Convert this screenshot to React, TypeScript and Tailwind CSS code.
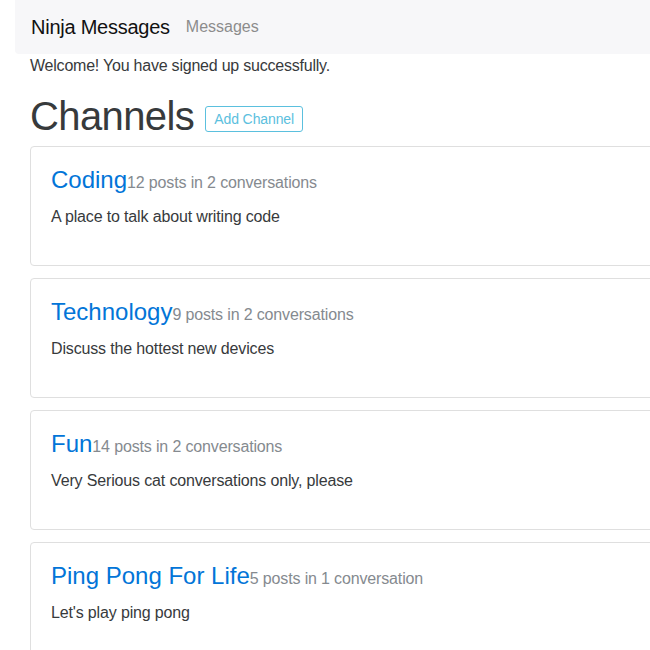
import React from "react";

const channels = [
  { name: "Coding", stats: "12 posts in 2 conversations", desc: "A place to talk about writing code" },
  { name: "Technology", stats: "9 posts in 2 conversations", desc: "Discuss the hottest new devices" },
  { name: "Fun", stats: "14 posts in 2 conversations", desc: "Very Serious cat conversations only, please" },
  { name: "Ping Pong For Life", stats: "5 posts in 1 conversation", desc: "Let's play ping pong" },
];

export default function App() {
  return (
    <div
      className="w-[650px] h-[650px] overflow-hidden bg-white text-[#373a3c]"
      style={{ fontFamily: '"Liberation Sans", Arial, sans-serif' }}
    >
      <div className="w-[700px] pl-[15px]">
        <nav className="flex items-center h-[54px] bg-[#f7f7f9] rounded-b-[4px] px-4">
          <span className="text-[20px] leading-[30px] tracking-[-0.25px] text-[#111] mr-4">Ninja Messages</span>
          <span className="text-[16px] leading-6 text-[#8c8c8c]">Messages</span>
        </nav>
        <div className="px-[15px]">
          <p className="text-[16px] leading-6 tracking-[-0.22px] mb-4">Welcome! You have signed up successfully.</p>
          <div className="flex items-start mb-2">
            <h1 className="text-[40px] leading-[44px] tracking-[-0.6px] text-[#373a3c]">Channels</h1>
            <button className="ml-[11px] mt-[12px] h-[26px] px-2 border border-[#5bc0de] rounded-[3px] text-[14px] tracking-[-0.1px] text-[#5bc0de] leading-none flex items-center">
              Add Channel
            </button>
          </div>
          <div className="flex flex-col gap-3">
            {channels.map((c) => (
              <div key={c.name} className="border border-[#dfdfdf] rounded-[4px] p-5 h-[120px]">
                <div className="flex items-baseline leading-[26px] mb-[9px]">
                  <span className="text-[24px] text-[#0275d8]">{c.name}</span>
                  <span className="text-[16px] tracking-[-0.15px] text-[#858a8f]">{c.stats}</span>
                </div>
                <p className="text-[16px] leading-6 tracking-[-0.15px] text-[#373a3c]">{c.desc}</p>
              </div>
            ))}
          </div>
        </div>
      </div>
    </div>
  );
}
